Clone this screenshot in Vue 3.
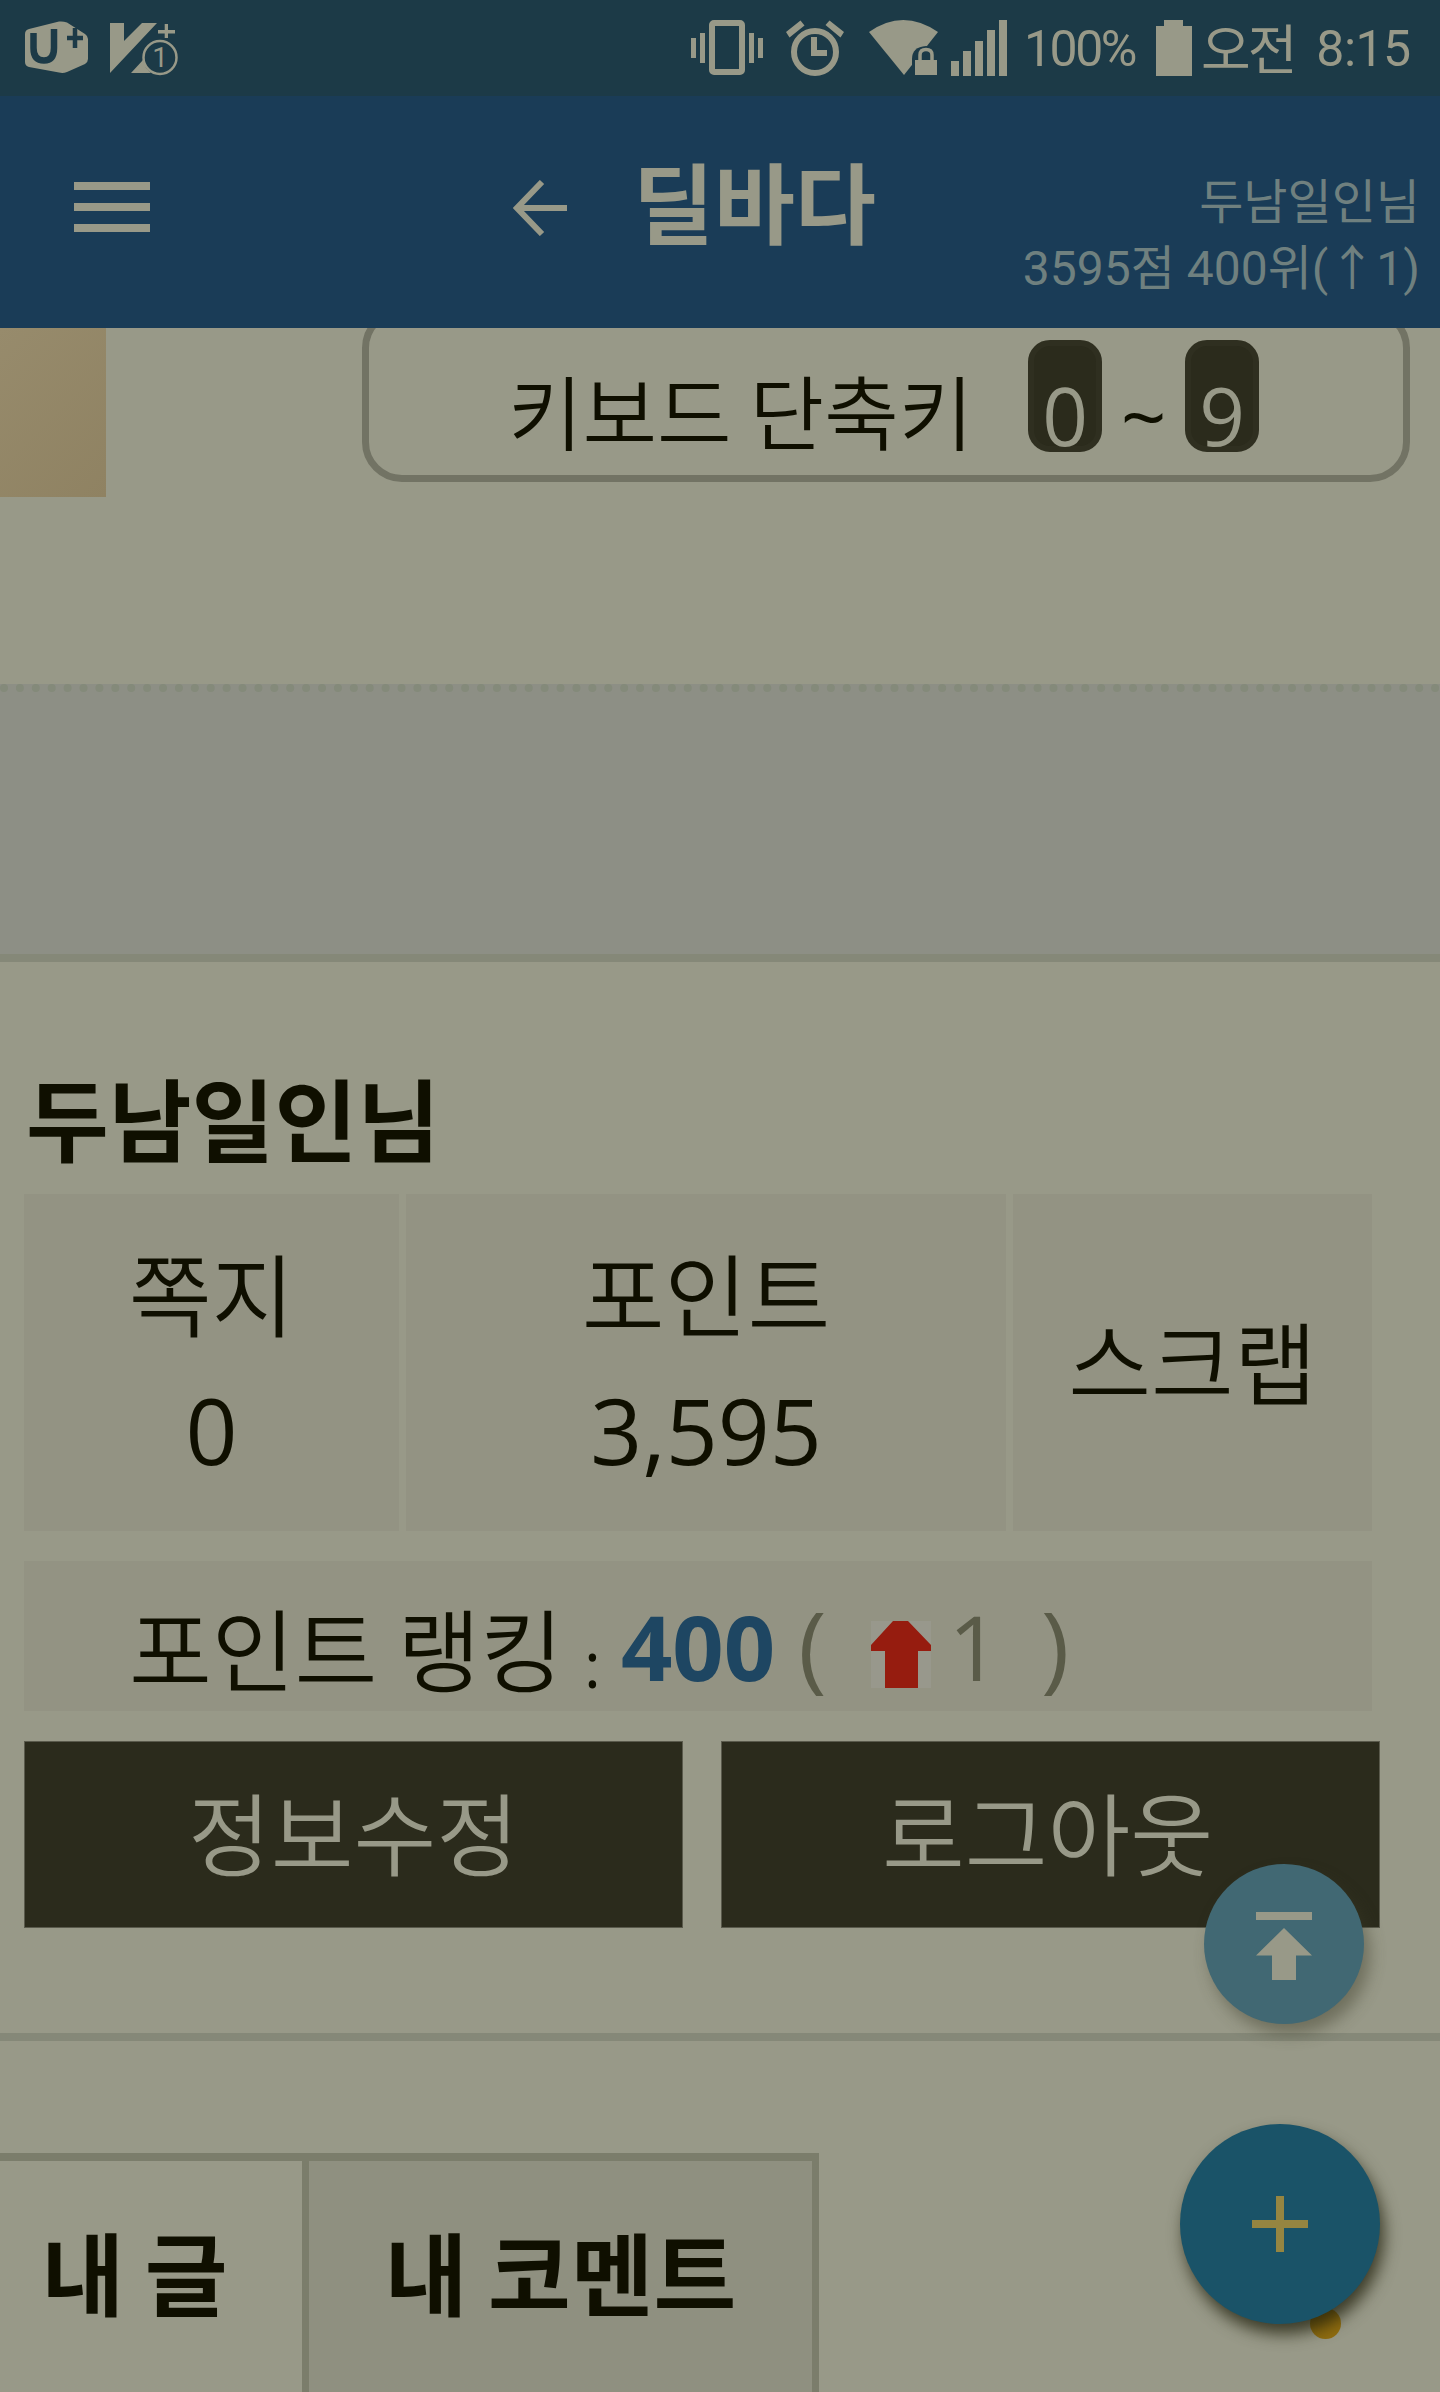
<script setup>
const cells = [
  { label: '쪽지', value: '0', cls: 'c1' },
  { label: '포인트', value: '3,595', cls: 'c2' },
  { label: '스크랩', value: '', cls: 'c3' }
]
</script>

<template>
  <div class="page">
    <div class="status">
      <div class="status-left">
        <svg class="ic-uplus" width="64" height="54" viewBox="0 0 64 54">
          <path fill="#989988" d="M4 8 L34 0.500 Q38 0 42 1.500 L60 13 Q63 15 63 18 L63 38 Q63 41 60 43 L42 51 Q38 52.500 34 51.500 L4 46 Q0 45 0 41 L0 13 Q0 9 4 8Z"/>
          <path fill="none" stroke="#1c3a47" stroke-width="6.500" d="M8.500 12 V27 Q8.500 39.500 19 39.500 Q29 39.500 29 27 V8"/>
          <path fill="none" stroke="#1c3a47" stroke-width="4.500" d="M42 17 H58 M50 7 V27"/>
        </svg>
        <svg class="ic-v" width="70" height="58" viewBox="0 0 70 58">
          <path fill="#989988" d="M0 2 H14 V20 L32 2 H47 L0 52Z"/>
          <path fill="#989988" d="M21 52 L33 39 L36 47 L41 52Z"/>
          <path fill="#989988" d="M48 9 H65 V12.500 H48Z M54.700 3 H58 V17 H54.700Z"/>
          <circle cx="50" cy="36.500" r="16.500" fill="#1c3a47" stroke="#989988" stroke-width="2.500"/>
          <text x="50" y="46" text-anchor="middle" class="ic-v-num">1</text>
        </svg>
      </div>
      <div class="status-right">
        <svg width="74" height="58" viewBox="0 0 74 58">
          <rect x="21" y="3" width="30" height="49" rx="2" fill="none" stroke="#989988" stroke-width="6"/>
          <path fill="#989988" d="M0 18 H5 V38 H0Z M9 13 H14 V43 H9Z M58 13 H63 V43 H58Z M67 18 H72 V38 H67Z"/>
        </svg>
        <svg width="58" height="58" viewBox="0 0 58 58" class="ic-alarm">
          <circle cx="29" cy="32" r="21" fill="none" stroke="#989988" stroke-width="6"/>
          <path fill="#989988" d="M25 17 H31 V30 H41 V36 H25Z"/>
          <path fill="#989988" d="M0 12 L14.500 0.500 L18.500 5.500 L3.500 17.500Z M39.500 5 L43.500 0.500 L58 12 L54.500 17.500Z"/>
        </svg>
        <svg width="70" height="56" viewBox="0 0 70 56" class="ic-wifi">
          <path fill="#989988" d="M0 12 Q34 -12 69 12 L35 55Z"/>
          <path fill="#1c3a47" d="M43 56 V39 Q43 27 57 26 Q70 27 71 39 V56Z"/>
          <rect x="46" y="40" width="22" height="15" fill="#989988"/>
          <path fill="none" stroke="#989988" stroke-width="3.500" d="M51 41 V35 Q51 29.500 57 29.500 Q63 29.500 63 35 V41"/>
        </svg>
        <svg width="56" height="56" viewBox="0 0 56 56" class="ic-signal">
          <path fill="#989988" d="M0 41 H8 V56 H0Z M12 31 H20 V56 H12Z M24 21 H32 V56 H24Z M36 10 H44 V56 H36Z M48 0 H56 V56 H48Z"/>
        </svg>
        <span class="st-text st-pct">100%</span>
        <svg class="ic-batt" width="36" height="56" viewBox="0 0 36 56">
          <path fill="#989988" d="M8 0 H27 V6 H36 V56 H0 V6 H8Z"/>
        </svg>
        <span class="st-text st-time"><span class="st-ko">오전</span> 8:15</span>
      </div>
    </div>

    <header class="topbar">
      <div class="menu"><i></i><i></i><i></i></div>
      <svg class="back" width="56" height="56" viewBox="0 0 56 56">
        <path fill="none" stroke="#989988" stroke-width="6" d="M54 28 H5 M29 2 L4 28 L29 54"/>
      </svg>
      <div class="title">딜바다</div>
      <div class="user">
        <div class="user-name">두남일인님</div>
        <div>3595점 400위(↑1)</div>
      </div>
    </header>

    <main class="content">
      <div class="top-row">
        <div class="thumb"></div>
        <div class="keys">
          <span class="keys-label">키보드 단축키</span>
          <span class="kbd">0</span>
          <span class="tilde">~</span>
          <span class="kbd">9</span>
        </div>
      </div>

      <div class="ad"></div>

      <section class="profile">
        <h1 class="name">두남일인님</h1>
        <div class="stats">
          <div v-for="c in cells" :key="c.label" class="cell" :class="c.cls">
            <div>{{ c.label }}</div>
            <div v-if="c.value" class="cell-value">{{ c.value }}</div>
          </div>
        </div>
        <div class="rank">
          <span class="rank-label">포인트 랭킹</span>
          <span class="rank-colon">:</span>
          <strong class="rank-num">400</strong>
          <span class="rank-paren p1">(</span>
          <svg class="rank-arrow" width="60" height="67" viewBox="0 0 60 67">
            <rect width="60" height="67" fill="#98988c"/>
            <path fill="#961c0f" d="M22 0 H37 L60 24 V30 H47 V67 H14 V30 H0 V24Z"/>
          </svg>
          <span class="rank-delta">1</span>
          <span class="rank-paren p2">)</span>
        </div>
        <div class="actions">
          <button class="btn">정보수정</button>
          <button class="btn btn2">로그아웃</button>
        </div>
      </section>

      <section class="tabs">
        <div class="tab tab-a">내 글</div>
        <div class="tab tab-b">내 코멘트</div>
      </section>
    </main>

    <button class="fab-top" aria-label="맨 위로">
      <svg width="56" height="68" viewBox="0 0 56 68">
        <path fill="#989988" d="M0 0 H56 V8 H0Z M28 16 L56 43.500 H40 V68 H16 V43.500 H0Z"/>
      </svg>
    </button>
    <div class="blob"></div>
    <button class="fab-add" aria-label="추가">
      <svg width="56" height="56" viewBox="0 0 56 56">
        <path fill="#958541" d="M24 0 H32 V24 H56 V32 H32 V56 H24 V32 H0 V24 H24Z"/>
      </svg>
    </button>
  </div>
</template>

<style>
html, body { margin: 0; padding: 0; background: #989988; }
</style>

<style scoped>
.page {
  position: relative;
  width: 1440px;
  height: 2392px;
  overflow: hidden;
  background: #989988;
  color: #0f0f00;
  font-family: "Noto Sans", "Noto Sans CJK KR", sans-serif;
  font-size: 90px;
}
.status {
  position: relative;
  z-index: 2;
  height: 96px;
  background: #1c3a47;
  display: flex;
  justify-content: space-between;
  color: #989988;
}
.status-left { display: flex; align-items: flex-start; padding: 21px 0 0 25px; gap: 21px; }
.ic-v-num { font: 400 28px Roboto, sans-serif; fill: #989988; }
.status-right { display: flex; align-items: flex-start; width: 749px; padding-top: 20px; box-sizing: border-box; }
.status-right svg { flex: none; }
.ic-alarm { margin-left: 21px; }
.ic-wifi { margin-left: 25px; }
.ic-signal { margin-left: 12px; }
.st-text {
  font-family: Roboto, "Noto Sans CJK KR", sans-serif;
  font-weight: 400;
  font-size: 50px;
  line-height: 56px;
  letter-spacing: -2.500px;
  margin-top: 1px;
  white-space: nowrap;
}
.st-pct { margin-left: 17px; width: 112px; flex: none; }
.ic-batt { margin-left: 20px; }
.st-time { margin-left: 9px; letter-spacing: -0.500px; }
.st-ko { font-size: 54px; letter-spacing: -3px; margin-right: 10px; vertical-align: -4px; }

.topbar {
  position: relative;
  z-index: 2;
  height: 232px;
  background: #1a3c57;
  display: flex;
  align-items: flex-start;
  color: #989988;
}
.menu { width: 76px; margin: 86px 0 0 74px; display: flex; flex-direction: column; gap: 13px; }
.menu i { display: block; height: 8px; background: #989988; }
.back { margin: 84px 0 0 363px; flex: none; }
.title { margin: 39px 0 0 64px; font-family: "Noto Sans CJK KR", sans-serif; font-weight: 700; font-size: 88px; line-height: 127px; white-space: nowrap; }
.user {
  margin-left: auto;
  padding: 74px 20px 0 0;
  text-align: right;
  color: #6f807f;
  font-family: Roboto, "Noto Sans CJK KR", sans-serif;
  font-size: 48px;
  line-height: 66px;
  white-space: nowrap;
}

.content { display: flex; flex-direction: column; }
.top-row { height: 356px; display: flex; align-items: flex-start; }
.thumb { width: 106px; height: 169px; background: linear-gradient(135deg, #978b6c, #8f8262); flex: none; }
.keys {
  box-sizing: border-box;
  width: 1048px;
  height: 174px;
  margin: -20px 0 0 256px;
  border: 7px solid #727364;
  border-radius: 40px;
  display: flex;
  align-items: flex-start;
  font-size: 80px;
  padding-left: 139px;
}
.keys-label { font-family: "Noto Sans CJK KR", sans-serif; font-weight: 350; font-size: 81px; line-height: 116px; margin-top: 36px; white-space: nowrap; width: 520px; flex: none; }
.kbd {
  box-sizing: border-box;
  flex: none;
  width: 74px;
  height: 112px;
  margin-top: 25px;
  border: 6px solid #2f2f20;
  border-radius: 22px;
  background: #2b2b1c;
  color: #989988;
  text-align: center;
  font-family: "Open Sans", sans-serif;
  font-weight: 400;
  line-height: 138px;
}
.tilde { flex: none; width: 83px; text-align: center; font-size: 80px; line-height: 80px; margin-top: 60px; font-family: "Open Sans", sans-serif; }

.ad { height: 262px; background: #8d8f85; border-top: 8px dotted #848a7a; border-bottom: 8px solid #858878; }

.profile { padding: 0 0 0 24px; height: 1079px; box-sizing: border-box; border-bottom: 8px solid #858878; }
.name { margin: 0; font-family: "Noto Sans CJK KR", sans-serif; font-weight: 700; font-size: 90px; line-height: 127px; padding: 91px 0 0 2px; height: 232px; box-sizing: border-box; }
.stats { display: flex; gap: 7px; height: 337px; width: 1348px; }
.cell {
  box-sizing: border-box;
  padding-bottom: 4px;
  background: #939383;
  display: flex;
  flex-direction: column;
  align-items: center;
  justify-content: center;
  gap: 9px;
  font-family: "Noto Sans CJK KR", sans-serif;
  font-weight: 350;
  line-height: 130px;
}
.c1 { width: 375px; }
.c2 { width: 600px; }
.c3 { width: 359px; padding-bottom: 8px; }
.cell-value { font-family: "Open Sans", sans-serif; font-weight: 400; font-size: 91px; }
.rank {
  margin-top: 30px;
  width: 1348px;
  height: 150px;
  background: #939383;
  display: flex;
  align-items: flex-start;
  padding-left: 105px;
  box-sizing: border-box;
}
.rank > * { flex: none; }
.rank-label { font-family: "Noto Sans CJK KR", sans-serif; font-weight: 350; line-height: 127px; margin-top: 22px; }
.rank-colon { font-size: 64px; line-height: 90px; margin: 58px 0 0 21px; font-family: "Open Sans", sans-serif; }
.rank-num { color: #1e4662; font-family: "Open Sans", sans-serif; font-weight: 700; line-height: 120px; margin: 25px 0 0 20px; }
.rank-paren { color: #5a5b48; font-family: "Open Sans", sans-serif; font-size: 96px; line-height: 120px; margin-top: 23px; font-weight: 400; }
.p1 { margin-left: 23px; }
.rank-arrow { margin: 60px 0 0 44px; }
.rank-delta { color: #5a5b48; font-family: "Open Sans", sans-serif; font-weight: 400; line-height: 120px; margin: 25px 0 0 18px; }
.p2 { margin-left: 41px; }
.actions { display: flex; gap: 38px; margin-top: 30px; }
.btn {
  box-sizing: border-box;
  width: 659px;
  height: 187px;
  padding: 0 0 10px;
  border: 1px solid #5a5a4c;
  background: #2b2b1c;
  color: #989988;
  font-family: "Noto Sans CJK KR", sans-serif;
  font-weight: 350;
  font-size: 90px;
}
.btn2 { padding-right: 6px; }
.tabs { display: flex; height: 239px; margin-top: 112px; align-items: stretch; }
.tab {
  box-sizing: border-box;
  border-top: 8px solid #7b7d6b;
  border-right: 7px solid #7b7d6b;
  font-family: "Noto Sans CJK KR", sans-serif;
  font-weight: 700;
  line-height: 127px;
  padding-top: 46px;
  text-align: center;
  white-space: nowrap;
}
.tab-a { width: 309px; padding-right: 33px; }
.tab-b { width: 510px; background: #8f9080; }

.fab-top, .fab-add {
  position: absolute;
  border: none;
  padding: 0;
  border-radius: 50%;
  display: flex;
  align-items: center;
  justify-content: center;
}
.fab-top { left: 1204px; top: 1864px; width: 160px; height: 160px; background: #416873; box-shadow: 6px 10px 16px rgba(60, 60, 40, 0.45); z-index: 3; }
.fab-top svg { margin-top: 4px; }
.fab-add { left: 1180px; top: 2124px; width: 200px; height: 200px; background: #1a5368; box-shadow: 4px 10px 16px rgba(30, 30, 10, 0.75); z-index: 3; }
.blob { position: absolute; left: 1310px; top: 2308px; width: 31px; height: 31px; border-radius: 50%; background: #8f6c10; z-index: 3; }
</style>
